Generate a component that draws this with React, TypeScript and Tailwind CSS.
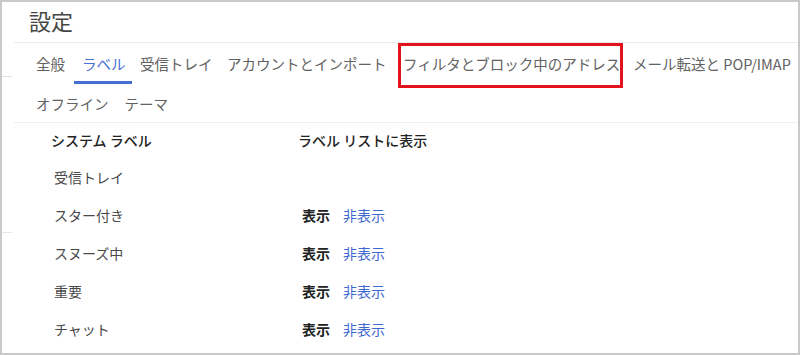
import React from "react";

const font = { fontFamily: '"Noto Sans CJK JP", "Noto Sans", sans-serif' };

const tabs = [
  { label: "全般", w: "w-[46px]" },
  { label: "ラベル", w: "w-[58px]", active: true },
  { label: "受信トレイ", w: "w-[87px]" },
  { label: "アカウントとインポート", w: "w-[176px]" },
  { label: "フィルタとブロック中のアドレス", w: "w-[230px]", marked: true },
  { label: "メール転送と POP/IMAP", w: "w-[170px]" },
];

const rows = [
  { name: "受信トレイ", toggle: false },
  { name: "スター付き", toggle: true },
  { name: "スヌーズ中", toggle: true },
  { name: "重要", toggle: true },
  { name: "チャット", toggle: true },
];

function Tab({ label, w, active, marked }: { label: string; w: string; active?: boolean; marked?: boolean }) {
  return (
    <div
      className={
        "relative flex h-[42px] shrink-0 items-center whitespace-nowrap px-2 text-[14.5px] " +
        w +
        " " +
        (active ? "text-[#4470d4]" : "text-[#626262]")
      }
    >
      <span>{label}</span>
      {active && <span className="absolute bottom-[1px] left-0 right-0 h-[3px] bg-[#4470d4]" />}
      {marked && (
        <span className="absolute left-[3px] right-[2px] top-0 h-[45px] border-[3px] border-[#e3121c]" />
      )}
    </div>
  );
}

export default function App() {
  return (
    <div
      className="flex h-[355px] w-[800px] overflow-hidden border-2 border-[#c9c9c9] bg-white"
      style={font}
    >
      <div className="flex w-[12px] shrink-0 flex-col">
        <div className="h-[74px]" />
        <div className="h-px w-[10px] bg-[#e2e2e2]" />
        <div className="h-[155px]" />
        <div className="h-px w-[10px] bg-[#e6e6e6]" />
      </div>
      <div className="flex min-w-0 flex-1 flex-col">
        <div className="flex h-[41px] items-center border-b border-[#ececec] pb-[5px] pl-[15px]">
          <span className="text-[22px] leading-none text-[#454545]">設定</span>
        </div>
        <div className="flex items-start pl-[14px]">
          {tabs.map((t) => (
            <Tab key={t.label} {...t} />
          ))}
        </div>
        <div className="flex h-[37px] items-center whitespace-nowrap pl-[14px] text-[14.5px] text-[#626262]">
          <span className="px-2">オフライン</span>
          <span className="px-2">テーマ</span>
        </div>
        <div className="border-t border-[#efefef]">
          <div className="flex h-[35px] items-center whitespace-nowrap text-[14px] font-medium text-[#222]">
            <div className="w-[284px] shrink-0 pl-[37px]">システム ラベル</div>
            <div>ラベル リストに表示</div>
          </div>
          {rows.map((r) => (
            <div key={r.name} className="flex h-[38px] items-center whitespace-nowrap text-[14px]">
              <div className="w-[288px] shrink-0 pl-[40px] text-[#4a4a4a]">{r.name}</div>
              {r.toggle && (
                <div className="flex gap-[13px]">
                  <span className="font-bold text-[#222]">表示</span>
                  <span className="text-[#3d68cf]">非表示</span>
                </div>
              )}
            </div>
          ))}
        </div>
      </div>
    </div>
  );
}
